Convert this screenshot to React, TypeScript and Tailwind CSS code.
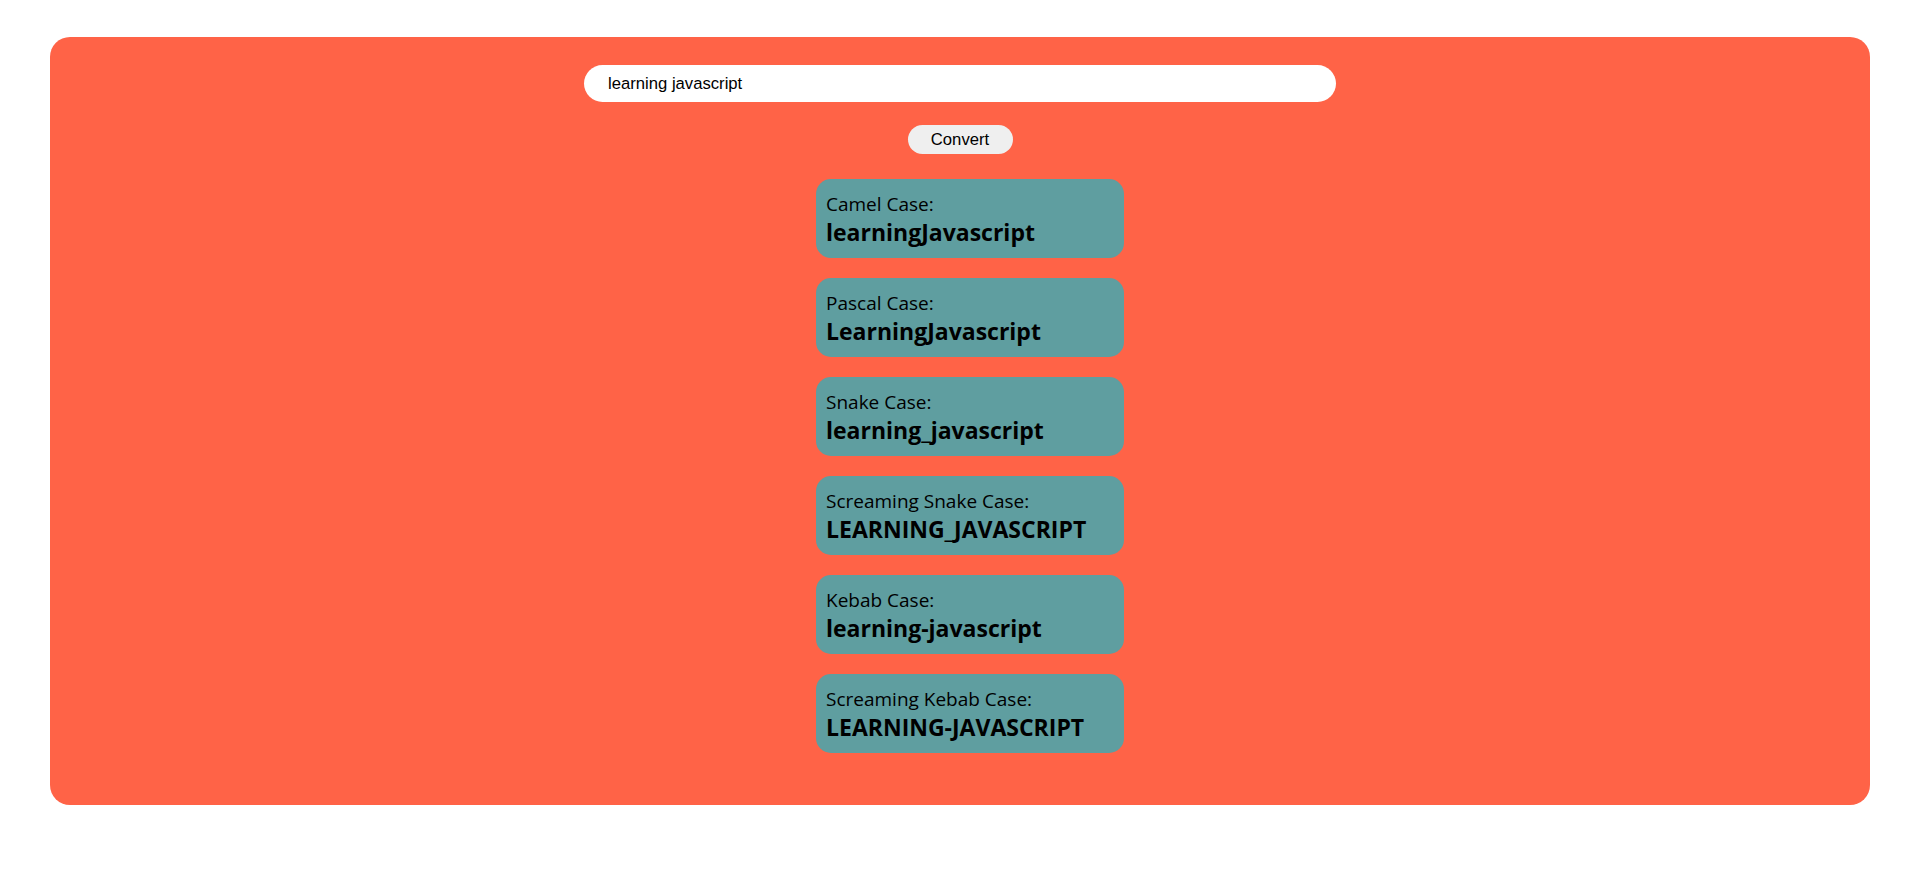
import React from "react";

const results: [string, string][] = [
  ["Camel Case:", "learningJavascript"],
  ["Pascal Case:", "LearningJavascript"],
  ["Snake Case:", "learning_javascript"],
  ["Screaming Snake Case:", "LEARNING_JAVASCRIPT"],
  ["Kebab Case:", "learning-javascript"],
  ["Screaming Kebab Case:", "LEARNING-JAVASCRIPT"],
];

export default function App() {
  return (
    <div className="min-h-[887px] w-full bg-white pt-[37px]">
      <div className="mx-[50px] flex flex-col items-center rounded-[20px] bg-[#ff6347] pt-[28px] pb-[52px]">
        <input
          type="text"
          defaultValue="learning javascript"
          className="h-[37px] w-[752px] rounded-full border-0 bg-white pl-[24px] font-['Liberation_Sans',Arial,sans-serif] text-[16.67px] text-black outline-none"
        />
        <button className="mt-[23px] h-[29px] w-[105px] rounded-full bg-[#efefef] font-['Liberation_Sans',Arial,sans-serif] text-[16.67px] text-black">
          Convert
        </button>
        <div className="mt-[25px] ml-[20px] flex flex-col gap-[20px]">
          {results.map(([label, value]) => (
            <div
              key={label}
              className="w-[308px] rounded-[15px] bg-[#5f9ea0] pt-[12px] pb-[10px] pl-[10px] pr-[10px] font-['Open_Sans',sans-serif] text-black"
            >
              <div className="text-[19px] leading-[26px]">{label}</div>
              <div className="text-[23px] font-bold leading-[31px] whitespace-nowrap">{value}</div>
            </div>
          ))}
        </div>
      </div>
    </div>
  );
}
